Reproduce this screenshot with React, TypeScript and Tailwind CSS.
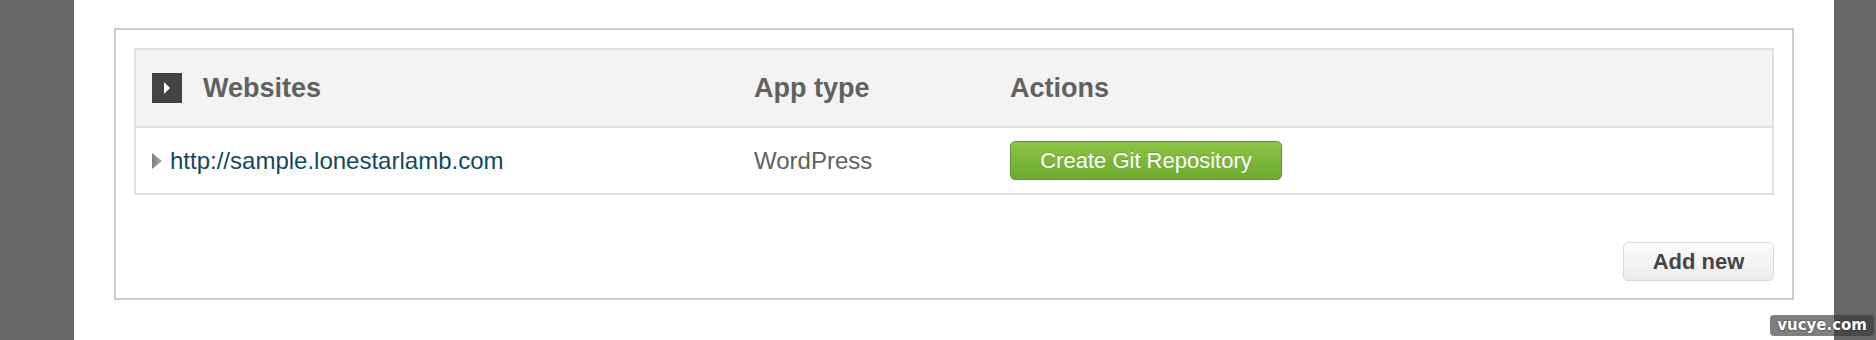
const font = { fontFamily: '"Liberation Sans", Arial, sans-serif' };

const HeaderIcon = () => (
	<div className="w-[30px] h-[30px] bg-[#434343] flex items-center justify-center">
		<svg width="6" height="12" viewBox="0 0 6 12">
			<path d="M0 0 L6 6 L0 12 Z" fill="#ffffff" />
		</svg>
	</div>
);

const RowArrow = () => (
	<svg width="10" height="16" viewBox="0 0 10 16">
		<defs>
			<linearGradient id="arr" x1="0" y1="0" x2="1" y2="0">
				<stop offset="0" stopColor="#7e7e7e" />
				<stop offset="1" stopColor="#a8a8a8" />
			</linearGradient>
		</defs>
		<path d="M0 0 L10 8 L0 16 Z" fill="url(#arr)" />
	</svg>
);

export default function App() {
	return (
		<div className="relative flex h-[340px] w-[1876px] bg-white" style={font}>
			<div className="w-[74px] bg-[#666666]" />

			<div className="flex-1 pt-[28px] px-[40px]">
				<div className="border-2 border-[#cccccc] px-[18px] pt-[18px] pb-[17px]">
					<div className="border-2 border-[#e1e1e1]">
						<div className="flex items-center h-[78px] bg-[#f3f3f3] border-b-2 border-[#e1e1e1] text-[27px] font-bold text-[#616161]">
							<div className="w-[618px] pl-4 flex items-center gap-[21px]">
								<HeaderIcon />
								<span>Websites</span>
							</div>
							<div className="w-[256px]">App type</div>
							<div className="flex-1">Actions</div>
						</div>

						<div className="flex items-center h-[65px] text-[24px]">
							<div className="w-[618px] pl-4 flex items-center gap-[8px]">
								<RowArrow />
								<a href="#" className="text-[#0e4a5e]">
									http://sample.lonestarlamb.com
								</a>
							</div>
							<div className="w-[256px] text-[#616161]">WordPress</div>
							<div className="flex-1 flex">
								<button className="w-[272px] h-[39px] rounded-[5px] border border-[#5c9a2e] bg-gradient-to-b from-[#8dc545] to-[#6caa2f] text-white text-[22px] [text-shadow:0_-1px_0_rgba(0,0,0,0.15)]">
									Create Git Repository
								</button>
							</div>
						</div>
					</div>

					<div className="flex justify-end mt-[47px]">
						<button className="w-[151px] h-[39px] rounded-[5px] border border-[#d9d9d9] bg-gradient-to-b from-[#fcfcfc] to-[#ebebeb] text-[22px] font-bold text-[#454545]">
							Add new
						</button>
					</div>
				</div>
			</div>

			<div className="w-[42px] bg-[#666666]" />

			<div
				className="absolute right-[2px] bottom-[4px] h-[21px] px-[7px] rounded-[4px] bg-[rgba(59,59,59,0.65)] flex items-center text-[15px] font-bold text-white [text-shadow:0_0_2px_#222]"
				style={{ fontFamily: '"DejaVu Sans", Verdana, sans-serif' }}
			>
				vucye.com
			</div>
		</div>
	);
}
